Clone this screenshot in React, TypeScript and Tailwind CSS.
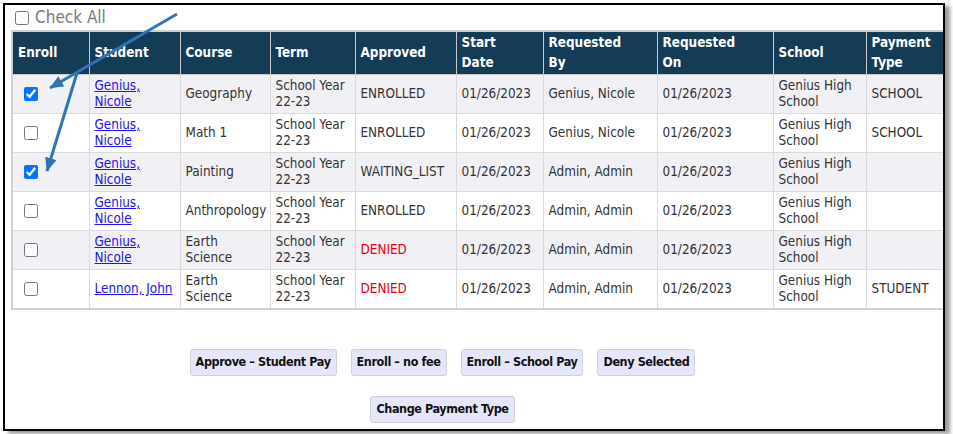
import type { ReactNode } from "react";

type Row = {
  checked: boolean;
  student: string[];
  course: string[];
  status: string;
  requestedBy: string;
  school: string[];
  payment: string;
};

const rows: Row[] = [
  { checked: true, student: ["Genius,", "Nicole"], course: ["Geography"], status: "ENROLLED", requestedBy: "Genius, Nicole", school: ["Genius High", "School"], payment: "SCHOOL" },
  { checked: false, student: ["Genius,", "Nicole"], course: ["Math 1"], status: "ENROLLED", requestedBy: "Genius, Nicole", school: ["Genius High", "School"], payment: "SCHOOL" },
  { checked: true, student: ["Genius,", "Nicole"], course: ["Painting"], status: "WAITING_LIST", requestedBy: "Admin, Admin", school: ["Genius High", "School"], payment: "" },
  { checked: false, student: ["Genius,", "Nicole"], course: ["Anthropology"], status: "ENROLLED", requestedBy: "Admin, Admin", school: ["Genius High", "School"], payment: "" },
  { checked: false, student: ["Genius,", "Nicole"], course: ["Earth", "Science"], status: "DENIED", requestedBy: "Admin, Admin", school: ["Genius High", "School"], payment: "" },
  { checked: false, student: ["Lennon, John"], course: ["Earth", "Science"], status: "DENIED", requestedBy: "Admin, Admin", school: ["Genius High", "School"], payment: "STUDENT" },
];

const headers: string[][] = [
  ["Enroll"],
  ["Student"],
  ["Course"],
  ["Term"],
  ["Approved"],
  ["Start", "Date"],
  ["Requested", "By"],
  ["Requested", "On"],
  ["School"],
  ["Payment", "Type"],
];

const colWidths = ["w-[77px]", "w-[91px]", "w-[90px]", "w-[85px]", "w-[101px]", "w-[87px]", "w-[114px]", "w-[116px]", "w-[93px]", "w-[86px]"];

function Lines({ lines }: { lines: string[] }) {
  return (
    <>
      {lines.map((l, i) => (
        <span key={i} className="block whitespace-nowrap">
          {l}
        </span>
      ))}
    </>
  );
}

function Td({ children, className = "" }: { children?: ReactNode; className?: string }) {
  return (
    <td className={`border border-[#dadada] px-[5px] py-[3px] align-middle leading-[16px] ${className}`}>{children}</td>
  );
}

function Btn({ children }: { children: ReactNode }) {
  return (
    <button className="h-[27px] rounded-[3px] border border-[#d0d0d8] bg-[#e6e6fa] px-[5px] text-[12.5px] font-bold tracking-[-0.4px] text-[#111]">
      {children}
    </button>
  );
}

export default function App() {
  return (
    <div
      className="relative h-[434px] w-[953px] overflow-hidden bg-white text-[13.4px] text-[#333]"
      style={{ fontFamily: '"DejaVu Sans Condensed", "DejaVu Sans", sans-serif' }}
    >
      <div className="ml-[3px] mt-[3px] h-[428px] w-[942px] overflow-hidden border-2 border-black bg-white shadow-[5px_3px_4px_rgba(0,0,0,0.4)]">
        <div className="flex h-[25px] items-center gap-[6px] pl-[10px]">
          <input type="checkbox" readOnly className="m-0 h-[14px] w-[14px]" />
          <span className="text-[17px] text-[#7b7b7b]">Check All</span>
        </div>

        <table className="ml-[6px] w-[940px] table-fixed border-collapse border-2 border-[#d0d0d0]">
          <colgroup>
            {colWidths.map((w, i) => (
              <col key={i} className={w} />
            ))}
          </colgroup>
          <thead>
            <tr>
              {headers.map((h, i) => (
                <th
                  key={i}
                  className="h-[42px] border border-[#c9c9c9] bg-[#143c57] px-[5px] py-[1px] text-left align-middle font-bold leading-[20px] text-white"
                >
                  <Lines lines={h} />
                </th>
              ))}
            </tr>
          </thead>
          <tbody>
            {rows.map((r, i) => (
              <tr key={i} className={i % 2 === 0 ? "h-[39px] bg-[#f0f0f5]" : "h-[39px] bg-white"}>
                <Td className="pl-[11px]">
                  <input type="checkbox" readOnly checked={r.checked} className="m-0 block h-[14px] w-[14px] accent-[#0075ff]" />
                </Td>
                <Td>
                  <a href="#" className="text-[#2414e6] underline">
                    <Lines lines={r.student} />
                  </a>
                </Td>
                <Td>
                  <Lines lines={r.course} />
                </Td>
                <Td>
                  <Lines lines={["School Year", "22-23"]} />
                </Td>
                <Td className={r.status === "DENIED" ? "text-[#e8000b]" : ""}>{r.status}</Td>
                <Td>01/26/2023</Td>
                <Td className="whitespace-nowrap">{r.requestedBy}</Td>
                <Td>01/26/2023</Td>
                <Td>
                  <Lines lines={r.school} />
                </Td>
                <Td>{r.payment}</Td>
              </tr>
            ))}
          </tbody>
        </table>

        <div className="mt-[39px] flex w-[875px] justify-center gap-[14px]">
          <Btn>Approve – Student Pay</Btn>
          <Btn>Enroll – no fee</Btn>
          <Btn>Enroll – School Pay</Btn>
          <Btn>Deny Selected</Btn>
        </div>
        <div className="mt-[20px] flex w-[875px] justify-center">
          <Btn>Change Payment Type</Btn>
        </div>
      </div>

      {/* callout arrows pasted over the screenshot */}
      <svg className="pointer-events-none absolute left-0 top-0" width="953" height="434" viewBox="0 0 953 434">
        <defs>
          <marker id="ah" markerWidth="4.6" markerHeight="4" refX="4.4" refY="2" orient="auto" markerUnits="strokeWidth">
            <path d="M0,0 L4.6,2 L0,4 z" fill="#2e75b6" />
          </marker>
        </defs>
        <line x1="177" y1="14" x2="50" y2="88" stroke="#2e75b6" strokeWidth="3" markerEnd="url(#ah)" />
        <line x1="77" y1="73" x2="47" y2="171" stroke="#2e75b6" strokeWidth="3" markerEnd="url(#ah)" />
      </svg>
    </div>
  );
}
